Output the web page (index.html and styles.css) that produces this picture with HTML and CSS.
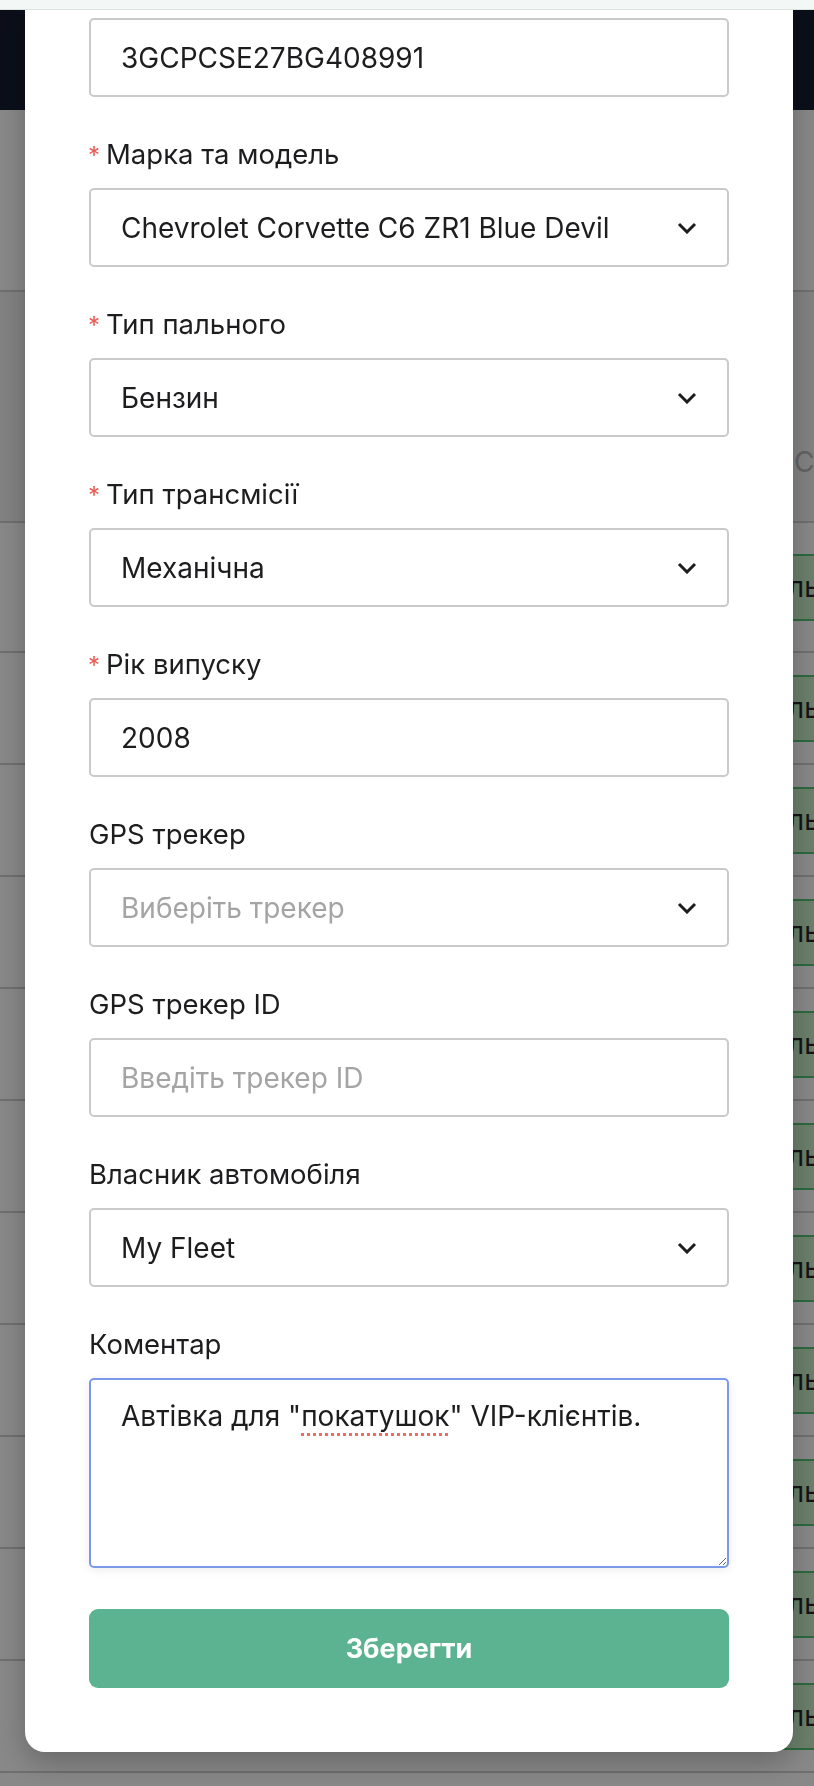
FILE: index.html
```html
<!DOCTYPE html>
<html lang="uk">
<head>
<meta charset="UTF-8">
<meta name="viewport" content="width=device-width, initial-scale=1.0">
<title>Редагування автомобіля</title>
<link rel="stylesheet" href="styles.css">
</head>
<body>
<div class="topbar"></div>

<div class="page">
  <header class="app-header"></header>
  <div class="toolbar"></div>
  <div class="cars">
    <div class="cars-head">
      <div class="col-main"></div>
      <div class="col-status">Статус</div>
    </div>
    <div class="cars-row first">
      <div class="col-main"></div>
      <div class="col-status"><span class="badge">Вільний</span></div>
    </div>
    <div class="cars-row"><div class="col-main"></div><div class="col-status"><span class="badge">Вільний</span></div></div>
    <div class="cars-row"><div class="col-main"></div><div class="col-status"><span class="badge">Вільний</span></div></div>
    <div class="cars-row"><div class="col-main"></div><div class="col-status"><span class="badge">Вільний</span></div></div>
    <div class="cars-row"><div class="col-main"></div><div class="col-status"><span class="badge">Вільний</span></div></div>
    <div class="cars-row"><div class="col-main"></div><div class="col-status"><span class="badge">Вільний</span></div></div>
    <div class="cars-row"><div class="col-main"></div><div class="col-status"><span class="badge">Вільний</span></div></div>
    <div class="cars-row"><div class="col-main"></div><div class="col-status"><span class="badge">Вільний</span></div></div>
    <div class="cars-row"><div class="col-main"></div><div class="col-status"><span class="badge">Вільний</span></div></div>
    <div class="cars-row"><div class="col-main"></div><div class="col-status"><span class="badge">Вільний</span></div></div>
    <div class="cars-row"><div class="col-main"></div><div class="col-status"><span class="badge">Вільний</span></div></div>
  </div>
</div>

<div class="overlay">
  <div class="modal">
    <form class="car-form">
      <div class="field">
        <div class="control">3GCPCSE27BG408991</div>
      </div>
      <div class="field">
        <label class="req">Марка та модель</label>
        <div class="control select">
          <span>Chevrolet Corvette C6 ZR1 Blue Devil</span>
          <svg class="chevron" viewBox="0 0 20 12"><polyline points="2,2 10,10 18,2"/></svg>
        </div>
      </div>
      <div class="field">
        <label class="req">Тип пального</label>
        <div class="control select">
          <span>Бензин</span>
          <svg class="chevron" viewBox="0 0 20 12"><polyline points="2,2 10,10 18,2"/></svg>
        </div>
      </div>
      <div class="field">
        <label class="req">Тип трансмісії</label>
        <div class="control select">
          <span>Механічна</span>
          <svg class="chevron" viewBox="0 0 20 12"><polyline points="2,2 10,10 18,2"/></svg>
        </div>
      </div>
      <div class="field">
        <label class="req">Рік випуску</label>
        <div class="control">2008</div>
      </div>
      <div class="field">
        <label>GPS трекер</label>
        <div class="control select">
          <span class="placeholder">Виберіть трекер</span>
          <svg class="chevron" viewBox="0 0 20 12"><polyline points="2,2 10,10 18,2"/></svg>
        </div>
      </div>
      <div class="field">
        <label>GPS трекер ID</label>
        <div class="control"><span class="placeholder">Введіть трекер ID</span></div>
      </div>
      <div class="field">
        <label>Власник автомобіля</label>
        <div class="control select">
          <span>My Fleet</span>
          <svg class="chevron" viewBox="0 0 20 12"><polyline points="2,2 10,10 18,2"/></svg>
        </div>
      </div>
      <div class="field">
        <label>Коментар</label>
        <div class="control area">Автівка для "<span class="typo">покатушок</span>" VIP-клієнтів.</div>
      </div>
      <button type="button" class="save">Зберегти</button>
    </form>
  </div>
</div>
</body>
</html>
```

FILE: styles.css
```css
* {
  box-sizing: border-box;
}

html, body {
  margin: 0;
  height: 100%;
  overflow: hidden;
}

body {
  font-family: Inter, "Noto Sans", sans-serif;
  background-color: #fff;
  color: #1d1d1f;
}

/* top strip above everything */
.topbar {
  position: fixed;
  top: 0;
  left: 0;
  right: 0;
  height: 10px;
  background-color: #f3f8f6;
  border-bottom: 1px solid #dbe4df;
  z-index: 20;
}

/* page behind the modal */
.app-header {
  height: 110px;
  background-color: #151c31;
}

.toolbar {
  height: 182px;
  border-bottom: 2px solid #d0d0d0;
}

.cars-head,
.cars-row {
  display: flex;
  width: 1100px;
  border-bottom: 2px solid #d0d0d0;
}

.cars-head {
  height: 231px;
  background-color: #f4f4f4;
  align-items: flex-end;
}

.cars-head .col-status {
  padding-bottom: 42px;
  padding-left: 55px;
  font-size: 28px;
  color: #b8b8b8;
}

.cars-row {
  height: 112px;
  align-items: center;
}

.cars-row.first {
  height: 130px;
}

.col-main {
  width: 739px;
  flex: none;
}

.badge {
  display: inline-block;
  height: 67px;
  line-height: 63px;
  padding: 0 22px;
  background-color: #c9efc9;
  border: 2px solid #54c772;
  border-radius: 6px;
  font-size: 28px;
  color: #262626;
}

/* modal */
.overlay {
  position: fixed;
  inset: 0;
  background-color: rgba(0, 0, 0, 0.467);
  z-index: 10;
}

.modal {
  margin-left: 25px;
  width: 768px;
  background-color: #fff;
  border-radius: 0 0 20px 20px;
  padding: 18px 64px 64px;
  box-shadow: 0 10px 30px rgba(0, 0, 0, 0.25);
}

.field {
  margin-bottom: 37px;
}

.field label {
  display: block;
  font-size: 27.5px;
  line-height: 40px;
  margin-bottom: 14px;
  color: #1d1d1f;
}

.field label.req::before {
  content: "*";
  color: #ec5a50;
  font-size: 24px;
  line-height: 0;
  margin-left: -1px;
  margin-right: 6px;
}

.control {
  display: flex;
  align-items: center;
  height: 79px;
  padding: 0 30px;
  border: 2px solid #cacaca;
  border-radius: 5px;
  font-size: 28px;
  line-height: 40px;
  color: #1d1d1f;
  background-color: #fff;
}

.select {
  justify-content: space-between;
}

.chevron {
  width: 20px;
  height: 12px;
  fill: none;
  stroke: #1d1d1f;
  stroke-width: 3;
}

.placeholder {
  color: #a4a4a4;
}

.area {
  display: block;
  height: 190px;
  padding: 16px 30px;
  border-color: #7a99e8;
  box-shadow: 0 2px 10px rgba(0, 0, 0, 0.08);
  resize: vertical;
  overflow: auto;
}

.typo {
  text-decoration: underline dotted #ef6b5f;
  text-decoration-thickness: 3px;
  text-underline-offset: 7px;
}

.save {
  display: block;
  width: 100%;
  height: 79px;
  margin-top: 41px;
  border: none;
  border-radius: 9px;
  background-color: #5cb391;
  color: #fff;
  font-family: Inter, "Noto Sans", sans-serif;
  font-size: 27px;
  font-weight: 700;
}
```
